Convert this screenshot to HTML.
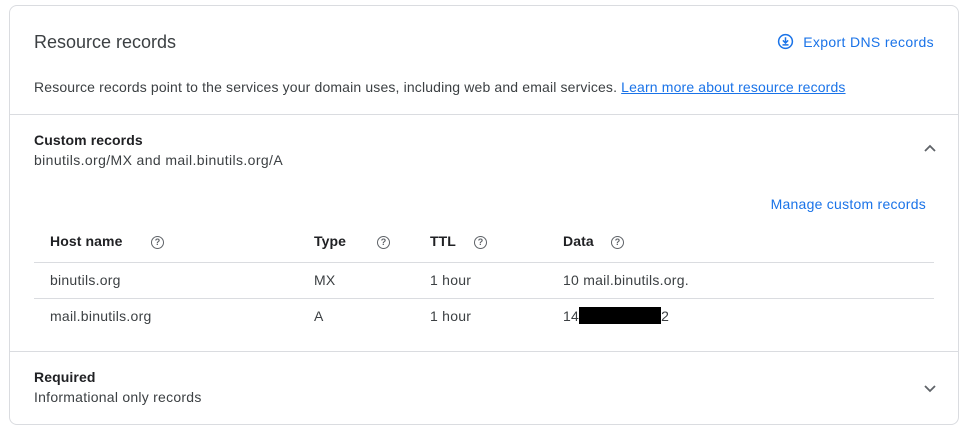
<!DOCTYPE html>
<html><head><style>
*{margin:0;padding:0;box-sizing:border-box}
body{width:966px;height:431px;background:#fff;font-family:"Liberation Sans",Arial,sans-serif;color:#3c4043;position:relative;overflow:hidden}
.card{position:absolute;left:9px;top:5px;width:950px;height:420px;border:1px solid #dadce0;border-radius:8px}
.t{position:absolute;white-space:nowrap;font-size:14px;line-height:18px;letter-spacing:0.25px}
.hr{position:absolute;height:1px;background:#dadce0}
.b{font-weight:bold;color:#202124;letter-spacing:0.1px}
.blue{color:#1a73e8}
.q{position:absolute;width:13px;height:13px;border:1.3px solid #5f6368;border-radius:50%;font-size:9px;line-height:11px;text-align:center;font-weight:bold;color:#5f6368}
</style></head><body>
<div class="card"></div>
<div class="t" style="left:34px;top:31px;font-size:18px;line-height:22px;letter-spacing:0">Resource records</div>
<svg style="position:absolute;left:777px;top:33px" width="17" height="17" viewBox="0 0 18 18"><circle cx="9" cy="9" r="7.3" fill="none" stroke="#1a73e8" stroke-width="1.6"/><path d="M9 4.5v6M6.2 7.8L9 10.6l2.8-2.8M5.8 12.6h6.4" fill="none" stroke="#1a73e8" stroke-width="1.6"/></svg>
<div class="t blue" style="right:32px;top:33px;letter-spacing:0.35px">Export DNS records</div>
<div class="t" style="left:34px;top:78px;letter-spacing:0.15px">Resource records point to the services your domain uses, including web and email services. <span class="blue" style="text-decoration:underline">Learn more about resource records</span></div>
<div class="hr" style="left:10px;width:948px;top:114px"></div>
<div class="t b" style="left:34px;top:131px">Custom records</div>
<div class="t" style="left:34px;top:151px;letter-spacing:0.38px">binutils.org/MX and mail.binutils.org/A</div>
<svg style="position:absolute;left:923px;top:143px" width="14" height="10"><path d="M2 8l5-5 5 5" fill="none" stroke="#5f6368" stroke-width="1.8"/></svg>
<div class="t blue" style="right:40px;top:195px">Manage custom records</div>
<div class="t b" style="left:50px;top:232px">Host name</div><div class="q" style="left:151px;top:236px">?</div>
<div class="t b" style="left:314px;top:232px">Type</div><div class="q" style="left:377px;top:236px">?</div>
<div class="t b" style="left:430px;top:232px">TTL</div><div class="q" style="left:474px;top:236px">?</div>
<div class="t b" style="left:563px;top:232px">Data</div><div class="q" style="left:611px;top:236px">?</div>
<div class="hr" style="left:34px;width:900px;top:262px"></div>
<div class="t" style="left:50px;top:271px">binutils.org</div>
<div class="t" style="left:314px;top:271px">MX</div>
<div class="t" style="left:430px;top:271px">1 hour</div>
<div class="t" style="left:563px;top:271px">10 mail.binutils.org.</div>
<div class="hr" style="left:34px;width:900px;top:298px"></div>
<div class="t" style="left:50px;top:307px">mail.binutils.org</div>
<div class="t" style="left:314px;top:307px">A</div>
<div class="t" style="left:430px;top:307px">1 hour</div>
<div class="t" style="left:563px;top:307px">14<span style="display:inline-block;width:82px;height:17px;background:#000;vertical-align:-3px"></span>2</div>
<div class="hr" style="left:10px;width:948px;top:351px"></div>
<div class="t b" style="left:34px;top:368px">Required</div>
<div class="t" style="left:34px;top:388px">Informational only records</div>
<svg style="position:absolute;left:923px;top:384px" width="14" height="10"><path d="M2 2l5 5 5-5" fill="none" stroke="#5f6368" stroke-width="1.8"/></svg>
</body></html>
